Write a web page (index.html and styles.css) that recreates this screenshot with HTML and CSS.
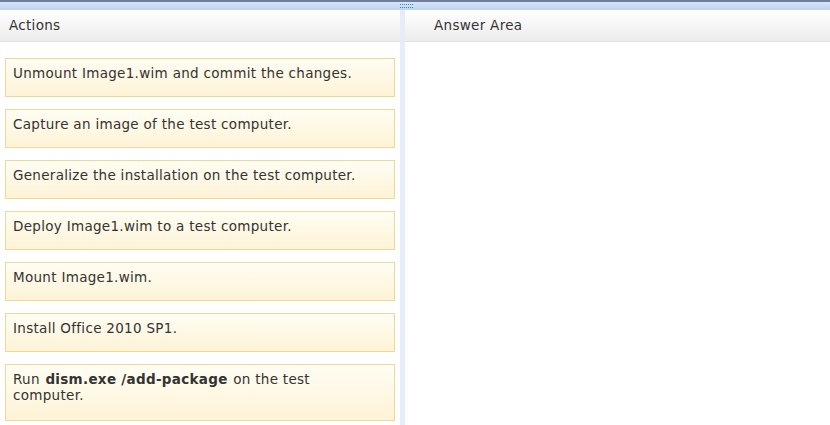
FILE: index.html
```html
<!DOCTYPE html>
<html>
<head>
  <meta charset="UTF-8">
  <title>Actions / Answer Area</title>
  <link rel="stylesheet" href="styles.css">
</head>
<body>
  <div class="topbar">
    <svg class="grip" width="14" height="5" viewBox="0 0 14 5">
      <g fill="#4f78b8">
        <rect x="0" y="0" width="1" height="1"/><rect x="2" y="0" width="1" height="1"/><rect x="4" y="0" width="1" height="1"/><rect x="6" y="0" width="1" height="1"/>
        <rect x="8" y="0" width="1" height="1"/><rect x="10" y="0" width="1" height="1"/><rect x="12" y="0" width="1" height="1"/>
        <rect x="0" y="3" width="1" height="1"/><rect x="2" y="3" width="1" height="1"/><rect x="4" y="3" width="1" height="1"/><rect x="6" y="3" width="1" height="1"/>
        <rect x="8" y="3" width="1" height="1"/><rect x="10" y="3" width="1" height="1"/><rect x="12" y="3" width="1" height="1"/>
      </g>
    </svg>
  </div>
  <div class="main">
    <div class="panel left">
      <div class="panel-head">Actions</div>
      <div class="actions">
        <div class="action">Unmount Image1.wim and commit the changes.</div>
        <div class="action">Capture an image of the test computer.</div>
        <div class="action">Generalize the installation on the test computer.</div>
        <div class="action">Deploy Image1.wim to a test computer.</div>
        <div class="action">Mount Image1.wim.</div>
        <div class="action">Install Office 2010 SP1.</div>
        <div class="action tall">Run <b class="cmd">dism.exe /add-package</b> on the test computer.</div>
      </div>
    </div>
    <div class="divider"></div>
    <div class="panel right">
      <div class="panel-head answer">Answer Area</div>
    </div>
  </div>
</body>
</html>
```

FILE: styles.css
```css
body { margin: 0; font-family: "DejaVu Sans", Verdana, sans-serif; font-size: 13.5px; letter-spacing: 0.3px; color: #333; background: #fff; }
.topbar { height: 8px; border-top: 2px solid #6f7f99; background: linear-gradient(#d6e6f9, #bcd3f0); position: relative; }
.grip { position: absolute; left: 400px; top: 2px; }
.main { display: flex; height: 415px; }
.left { width: 400px; }
.divider { width: 5px; background: #e4edf8; }
.right { flex: 1; }
.panel-head { height: 31px; line-height: 31px; padding-left: 9px; border-bottom: 1px solid #e2e2e2;
  background: linear-gradient(#ffffff, #ececec); }
.panel-head.answer { padding-left: 29px; }
.actions { padding: 16px 5px 0 5px; display: flex; flex-direction: column; gap: 12px; }
.action { height: 23px; padding: 6px 8px 8px 7px; line-height: 16px; border: 1px solid #ecd99a;
  background: linear-gradient(#fffdf3, #fdf3d6); }
.action.tall { height: 41px; padding-right: 60px; }
.cmd { margin: 0 1px; }
```
